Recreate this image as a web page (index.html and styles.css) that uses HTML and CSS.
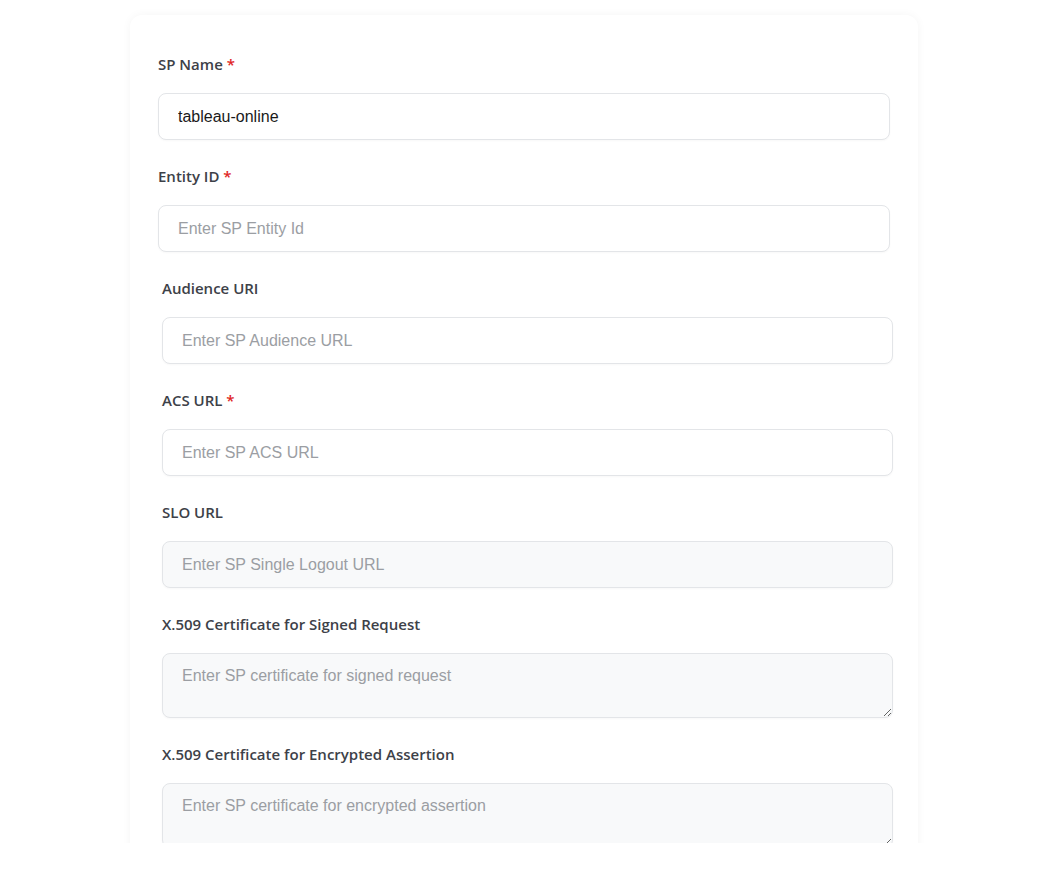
FILE: index.html
```html
<!DOCTYPE html>
<html lang="en">
<head>
<meta charset="utf-8">
<title>SP Configuration</title>
<link rel="stylesheet" href="styles.css">
</head>
<body>
<div class="viewport">
  <form class="card">
    <div class="section section-top">
      <div class="field">
        <label class="label">SP Name <span class="req">*</span></label>
        <input class="input" type="text" value="tableau-online">
      </div>
      <div class="field">
        <label class="label">Entity ID <span class="req">*</span></label>
        <input class="input" type="text" placeholder="Enter SP Entity Id">
      </div>
    </div>
    <div class="section section-rest">
      <div class="field">
        <label class="label">Audience URI</label>
        <input class="input" type="text" placeholder="Enter SP Audience URL">
      </div>
      <div class="field">
        <label class="label">ACS URL <span class="req">*</span></label>
        <input class="input" type="text" placeholder="Enter SP ACS URL">
      </div>
      <div class="field">
        <label class="label">SLO URL</label>
        <input class="input input-muted" type="text" placeholder="Enter SP Single Logout URL">
      </div>
      <div class="field">
        <label class="label">X.509 Certificate for Signed Request</label>
        <textarea class="input textarea input-muted" placeholder="Enter SP certificate for signed request"></textarea>
      </div>
      <div class="field">
        <label class="label">X.509 Certificate for Encrypted Assertion</label>
        <textarea class="input textarea input-muted" placeholder="Enter SP certificate for encrypted assertion"></textarea>
      </div>
    </div>
  </form>
</div>
</body>
</html>
```

FILE: styles.css
```css
* { box-sizing: border-box; }

html, body {
  margin: 0;
  padding: 0;
  background: #ffffff;
}

.viewport {
  height: 843px;
  overflow: hidden;
  padding-top: 15px;
}

.card {
  width: 788px;
  margin-left: 130px;
  min-height: 1000px;
  background: #ffffff;
  border-radius: 12px 12px 0 0;
  box-shadow: 0 0 10px rgba(0, 0, 0, 0.045);
  padding-top: 38px;
  display: flex;
  flex-direction: column;
  gap: 25px;
}

.section {
  display: flex;
  flex-direction: column;
  gap: 25px;
}

.section-top {
  padding: 0 28px 0 28px;
}

.section-rest {
  padding: 0 25px 0 32px;
}

.field {
  display: flex;
  flex-direction: column;
  gap: 18px;
}

.label {
  font-family: "Open Sans", "Noto Sans", sans-serif;
  font-weight: 600;
  font-size: 15px;
  line-height: 22px;
  height: 22px;
  color: #3d4148;
}

.req {
  color: #e02424;
}

.input {
  display: block;
  width: 100%;
  height: 47px;
  margin: 0;
  padding: 0 19px;
  font-family: "Liberation Sans", Arial, sans-serif;
  font-size: 16px;
  color: #1a1a1a;
  background: #ffffff;
  border: 1px solid #e3e5e8;
  border-radius: 8px;
  box-shadow: 0 1px 2px rgba(0, 0, 0, 0.03);
  outline: none;
}

.input::placeholder {
  color: #9b9ea3;
  opacity: 1;
}

.input-muted {
  background: #f8f9fa;
}

.textarea {
  height: 65px;
  padding: 12px 19px;
  line-height: 20px;
  resize: vertical;
}
```
